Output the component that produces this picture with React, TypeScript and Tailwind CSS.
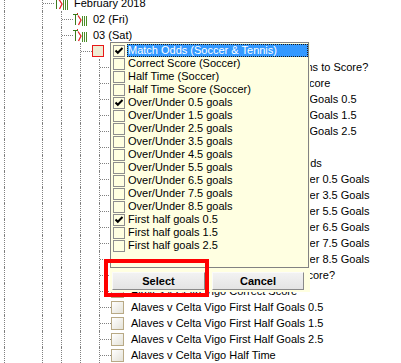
import React from "react";

type TreeRowData = {
  lines: boolean[];
  kind: "icon" | "box" | "redbox";
  text: string;
};

const DOT = "border-dotted border-[#808080]";

function DayIcon() {
  return (
    <svg width="14" height="13" viewBox="0 0 14 13" className="shrink-0">
      <rect x="0" y="1" width="5" height="1" fill="#3b7a1c" />
      <rect x="2" y="1" width="1" height="11" fill="#3b7a1c" />
      <rect x="4" y="0" width="1" height="1" fill="#e3262a" />
      <path d="M5 2.5 L8 7 L5.5 12" stroke="#e3262a" strokeWidth="1.3" fill="none" />
      <rect x="9" y="3" width="1" height="10" fill="#4b8d26" />
      <rect x="11" y="3" width="1" height="10" fill="#4b8d26" />
      <rect x="13" y="3" width="1" height="10" fill="#4b8d26" />
    </svg>
  );
}

function TreeRow({ lines, kind, text }: TreeRowData) {
  return (
    <div className="flex h-4 items-center whitespace-nowrap">
      {lines.map((l, i) => (
        <div key={i} className="flex h-full w-[19px] shrink-0">
          {l && (
            <>
              <div className="w-1 shrink-0" />
              <div className={`h-full border-l ${DOT}`} />
            </>
          )}
        </div>
      ))}
      <div className="flex h-full w-4 shrink-0">
        <div className="w-1 shrink-0" />
        <div className={`h-full border-l ${DOT}`} />
        <div className="flex w-[11px] flex-col">
          <div className="h-2 shrink-0" />
          <div className={`border-t ${DOT}`} />
        </div>
      </div>
      {kind === "icon" && (
        <>
          <DayIcon />
          <span className="ml-[6px] text-[11px] leading-4 text-black">{text}</span>
        </>
      )}
      {kind === "box" && (
        <>
          <div className="h-[13px] w-[13px] shrink-0 border border-[#b8a985] bg-linear-to-br from-[#ffffff] to-[#e4e2d8]" />
          <span className="ml-[7px] text-[11px] leading-4 text-black">{text}</span>
        </>
      )}
      {kind === "redbox" && (
        <>
          <div className="h-3 w-3 shrink-0 border border-[#e81818] bg-[#efecd4]" />
          <span className="ml-[8px] text-[11px] leading-4 text-black">{text}</span>
        </>
      )}
    </div>
  );
}

const L5 = [true, false, true, true, true];
const A = "Real Sociedad v Espanyol ";
const B = "Alaves v Celta Vigo ";

const treeRows: TreeRowData[] = [
  { lines: [true, false], kind: "icon", text: "February 2018" },
  { lines: [true, false, true], kind: "icon", text: "02 (Fri)" },
  { lines: [true, false, true], kind: "icon", text: "03 (Sat)" },
  { lines: [true, false, true, true], kind: "redbox", text: "Markets" },
  { lines: L5, kind: "box", text: A + "Both teams to Score?" },
  { lines: L5, kind: "box", text: A + "Correct Score" },
  { lines: L5, kind: "box", text: A + "First Half Goals 0.5" },
  { lines: L5, kind: "box", text: A + "First Half Goals 1.5" },
  { lines: L5, kind: "box", text: A + "First Half Goals 2.5" },
  { lines: L5, kind: "box", text: A + "Half Time" },
  { lines: L5, kind: "box", text: A + "Match Odds" },
  { lines: L5, kind: "box", text: A + "Over/Under 0.5 Goals" },
  { lines: L5, kind: "box", text: A + "Over/Under 3.5 Goals" },
  { lines: L5, kind: "box", text: A + "Over/Under 5.5 Goals" },
  { lines: L5, kind: "box", text: A + "Over/Under 6.5 Goals" },
  { lines: L5, kind: "box", text: A + "Over/Under 7.5 Goals" },
  { lines: L5, kind: "box", text: A + "Over/Under 8.5 Goals" },
  { lines: L5, kind: "box", text: B + "Both teams to Score?" },
  { lines: L5, kind: "box", text: B + "Correct Score" },
  { lines: L5, kind: "box", text: B + "First Half Goals 0.5" },
  { lines: L5, kind: "box", text: B + "First Half Goals 1.5" },
  { lines: L5, kind: "box", text: B + "First Half Goals 2.5" },
  { lines: L5, kind: "box", text: B + "Half Time" },
];

const listItems: { label: string; checked?: boolean; selected?: boolean }[] = [
  { label: "Match Odds (Soccer & Tennis)", checked: true, selected: true },
  { label: "Correct Score (Soccer)" },
  { label: "Half Time (Soccer)" },
  { label: "Half Time Score (Soccer)" },
  { label: "Over/Under 0.5 goals", checked: true },
  { label: "Over/Under 1.5 goals" },
  { label: "Over/Under 2.5 goals" },
  { label: "Over/Under 3.5 goals" },
  { label: "Over/Under 4.5 goals" },
  { label: "Over/Under 5.5 goals" },
  { label: "Over/Under 6.5 goals" },
  { label: "Over/Under 7.5 goals" },
  { label: "Over/Under 8.5 goals" },
  { label: "First half goals 0.5", checked: true },
  { label: "First half goals 1.5" },
  { label: "First half goals 2.5" },
];

function ListCheck({ checked }: { checked?: boolean }) {
  return (
    <div className="flex h-3 w-3 shrink-0 items-center justify-center border border-[#8e8e8e]">
      {checked && (
        <svg width="10" height="10" viewBox="0 0 10 10">
          <path d="M1.5 4.5 L3.8 6.8 L8.5 2" stroke="#000" strokeWidth="2" fill="none" />
        </svg>
      )}
    </div>
  );
}

function Button({ label, w }: { label: string; w: string }) {
  return (
    <div
      className={`flex h-[18px] ${w} items-center justify-center border border-t-[#fafafa] border-l-[#fafafa] border-r-[#8a8a8a] border-b-[#8a8a8a] bg-linear-to-b from-[#f2f2f2] to-[#e4e4e4] text-[11px] font-bold leading-none text-black`}
    >
      {label}
    </div>
  );
}

export default function App() {
  return (
    <div className="relative h-[363px] w-[401px] overflow-hidden bg-white font-['Liberation_Sans',Arial,sans-serif]">
      <div className="-mt-[5px] flex flex-col">
        {treeRows.map((r, i) => (
          <TreeRow key={i} {...r} />
        ))}
      </div>

      <div className="absolute left-[110px] top-[42px] flex h-[250px] w-[200px] flex-col bg-[#ffffe1]">
        <div className="flex h-[226px] w-[199px] flex-col border border-[#828282] pt-px">
          {listItems.map((it, i) => (
            <div key={i} className="flex h-[13px] shrink-0 items-center pl-[2px]">
              <ListCheck checked={it.checked} />
              <div
                className={`ml-[2px] flex h-[13px] flex-1 items-center whitespace-nowrap border text-[11px] leading-none ${
                  it.selected
                    ? "border-dotted border-[#1a1a1a] bg-[#3399ff] text-white"
                    : "border-transparent text-black"
                }`}
              >
                {it.label}
              </div>
            </div>
          ))}
        </div>
        <div className="mt-[4px] flex gap-[7px] pl-[2px]">
          <Button label="Select" w="w-[93px]" />
          <Button label="Cancel" w="w-[92px]" />
        </div>
      </div>

      <div className="absolute left-[104px] top-[259px] h-[38px] w-[105px] border-4 border-[#ff0000]" />
    </div>
  );
}
